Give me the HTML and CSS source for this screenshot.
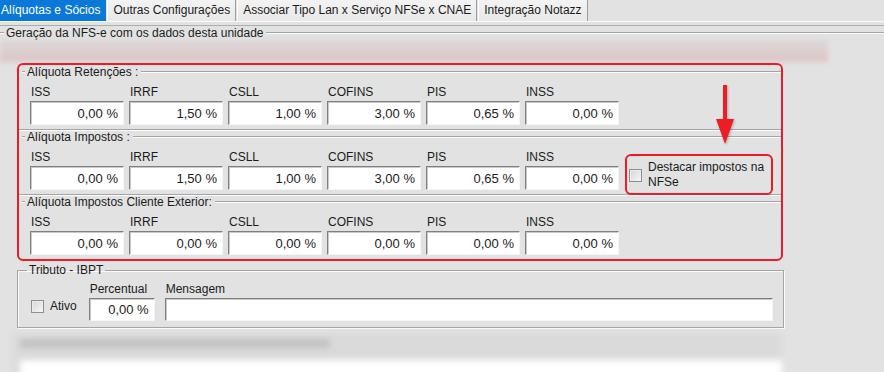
FILE: index.html
```html
<!DOCTYPE html>
<html lang="pt-BR">

<head>
    <meta charset="UTF-8">
    <meta name="viewport" content="width=device-width, initial-scale=1.0">
    <title>Alíquotas e Sócios</title>
    <link rel="stylesheet" href="styles.css">
</head>

<body>
    <div class="tabs">
        <div class="tab active">Alíquotas e Sócios</div>
        <div class="tab">Outras Configurações</div>
        <div class="tab">Associar Tipo Lan x Serviço NFSe x CNAE</div>
        <div class="tab">Integração Notazz</div>
    </div>

    <div class="panel">
        <div class="panel-body">
            <div class="unit">
                <div class="group-title unit-title">Geração da NFS-e com os dados desta unidade</div>
                <div class="blurred"></div>

                <div class="highlight">
                    <section class="group">
                        <div class="group-title">Alíquota Retenções :</div>
                        <div class="row">
                            <label class="field"><span>ISS</span><input type="text" value="0,00 %"></label>
                            <label class="field"><span>IRRF</span><input type="text" value="1,50 %"></label>
                            <label class="field"><span>CSLL</span><input type="text" value="1,00 %"></label>
                            <label class="field"><span>COFINS</span><input type="text" value="3,00 %"></label>
                            <label class="field"><span>PIS</span><input type="text" value="0,65 %"></label>
                            <label class="field"><span>INSS</span><input type="text" value="0,00 %"></label>
                        </div>
                    </section>

                    <section class="group">
                        <div class="group-title">Alíquota Impostos :</div>
                        <div class="row">
                            <label class="field"><span>ISS</span><input type="text" value="0,00 %"></label>
                            <label class="field"><span>IRRF</span><input type="text" value="1,50 %"></label>
                            <label class="field"><span>CSLL</span><input type="text" value="1,00 %"></label>
                            <label class="field"><span>COFINS</span><input type="text" value="3,00 %"></label>
                            <label class="field"><span>PIS</span><input type="text" value="0,65 %"></label>
                            <label class="field"><span>INSS</span><input type="text" value="0,00 %"></label>
                            <label class="check marked">
                                <span class="box"></span>
                                <span class="check-text">Destacar impostos na NFSe</span>
                            </label>
                        </div>
                    </section>

                    <section class="group last">
                        <div class="group-title">Alíquota Impostos Cliente Exterior:</div>
                        <div class="row">
                            <label class="field"><span>ISS</span><input type="text" value="0,00 %"></label>
                            <label class="field"><span>IRRF</span><input type="text" value="0,00 %"></label>
                            <label class="field"><span>CSLL</span><input type="text" value="0,00 %"></label>
                            <label class="field"><span>COFINS</span><input type="text" value="0,00 %"></label>
                            <label class="field"><span>PIS</span><input type="text" value="0,00 %"></label>
                            <label class="field"><span>INSS</span><input type="text" value="0,00 %"></label>
                        </div>
                    </section>

                    <!-- annotation arrow -->
                    <svg class="arrow" width="22" height="64" viewBox="0 0 22 64">
                        <line x1="11" y1="2" x2="11" y2="40" stroke="#ee1c24" stroke-width="4" />
                        <polygon points="2,36 20,36 11,61" fill="#ee1c24" />
                    </svg>
                </div>

                <fieldset class="ibpt">
                    <legend>Tributo - IBPT</legend>
                    <div class="ibpt-row">
                        <label class="check ativo">
                            <span class="box"></span>
                            <span>Ativo</span>
                        </label>
                        <label class="field percentual"><span>Percentual</span><input type="text" value="0,00 %"></label>
                        <label class="field mensagem"><span>Mensagem</span><input type="text" value=""></label>
                    </div>
                </fieldset>

                <div class="blur-footer">
                    <div class="blur-text"></div>
                    <div class="blur-field"></div>
                </div>
            </div>
        </div>
    </div>
</body>

</html>
```

FILE: styles.css
```css
* {
    box-sizing: border-box;
}

body {
    margin: 0;
    width: 884px;
    height: 372px;
    overflow: hidden;
    background-color: #e2e2e2;
    font-family: 'Liberation Sans', Arial, sans-serif;
    font-size: 12px;
    line-height: 14px;
    color: #1b1b1b;
}

/* tabs */
.tabs {
    display: flex;
    height: 21px;
}

.tab {
    padding: 0 5px;
    margin-right: 1px;
    line-height: 21px;
    white-space: nowrap;
    background: linear-gradient(#f3f3f3, #e8e8e8);
    border-left: 1px solid #fdfdfd;
    border-right: 1px solid #9d9d9d;
}

.tab.active {
    padding: 0 6px 0 1px;
    background-color: #0a78d7;
    background-image: none;
    color: white;
    border: none;
}

.panel {
    border-top: 1px solid #fafafa;
    padding-top: 3px;
}

.panel-body {
    border-top: 1px solid #adadad;
}

/* group boxes */
.group-title {
    display: flex;
    align-items: center;
    gap: 2px;
    height: 14px;
    padding-left: 3px;
    white-space: nowrap;
}

.group-title::before,
.group-title::after {
    content: "";
    border-top: 1px solid #a4a4a4;
    border-bottom: 1px solid #fbfbfb;
}

.group-title::before {
    width: 3px;
}

.group-title::after {
    flex: 1;
    margin-left: 1px;
}

.unit-title {
    padding-left: 0;
    gap: 2px;
}

.unit-title::before {
    width: 4px;
}

.blurred {
    height: 22px;
    width: 828px;
    background: linear-gradient(180deg, #dcd8d8, #ddcfcf 50%, #dbc6c6);
    filter: blur(2px);
}

.highlight {
    position: relative;
    width: 766px;
    margin: 1px 0 0 17px;
    border: 2px solid #ec1c24;
    border-radius: 6px;
}

.group {
    padding-bottom: 4px;
    border-bottom: 1px solid #a4a4a4;
    box-shadow: 0 1px 0 #fbfbfb;
}

.group.last {
    border-bottom: none;
    box-shadow: none;
    padding-bottom: 4px;
}

.row {
    display: flex;
    gap: 5px;
    margin: 6px 0 0 11px;
}

.field {
    display: flex;
    flex-direction: column;
    gap: 2px;
    width: 94px;
}

.field span {
    padding-left: 1px;
}

.field input {
    width: 100%;
    height: 24px;
    margin: 0;
    padding: 0 5px 0 4px;
    text-align: right;
    font-family: inherit;
    font-size: 13px;
    color: #1b1b1b;
    background: white;
    border: 1px solid;
    border-color: #7f7f7f #f6f6f6 #f6f6f6 #7f7f7f;
    box-shadow: inset 1px 1px 0 #c9c9c9;
    outline: none;
}

/* checkboxes */
.check {
    display: flex;
    align-items: center;
}

.box {
    flex: none;
    width: 13px;
    height: 13px;
    margin-right: 6px;
    border: 1px solid #8e8e8e;
    background: linear-gradient(135deg, #d6d6d6, #f7f7f7);
    box-shadow: inset 1px 1px 0 #ececec;
}

.check.marked {
    position: relative;
    margin: 10px 0 0 5px;
    align-self: flex-start;
}

.check-text {
    width: 120px;
    line-height: 15px;
}

/* red annotation around the checkbox */
.check.marked::after {
    content: "";
    position: absolute;
    top: -6px;
    left: -4px;
    right: -5px;
    bottom: -5px;
    border: 2px solid #ec1c24;
    border-radius: 6px;
}

.arrow {
    position: absolute;
    left: 695px;
    top: 18px;
    filter: drop-shadow(1px 1px 1px rgba(0, 0, 0, 0.25));
}

/* Tributo - IBPT */
.ibpt {
    width: 767px;
    margin: 2px 0 0 17px;
    padding: 0 9px 6px 9px;
    border: 1px solid #a4a4a4;
    box-shadow: inset 1px 1px 0 #fbfbfb, 1px 1px 0 #fbfbfb;
    min-width: 0;
}

.ibpt legend {
    padding: 0 2px;
    line-height: 14px;
}

.ibpt-row {
    display: flex;
    align-items: flex-end;
    margin: 5px 0 0 4px;
}

.check.ativo {
    margin-bottom: 8px;
}

.check.ativo .box {
    margin-right: 6px;
}

.percentual {
    width: 66px;
    margin-left: 12px;
}

.mensagem {
    width: 608px;
    margin-left: 10px;
}

.ibpt .field input {
    height: 23px;
}

.blur-footer {
    width: 770px;
    margin: 5px 0 0 12px;
    padding: 6px 0 0 8px;
    background: #dadada;
    filter: blur(3px);
}

.blur-text {
    width: 310px;
    height: 9px;
    background: #c2c2c2;
}

.blur-field {
    height: 30px;
    margin-top: 12px;
    background: white;
}
```
